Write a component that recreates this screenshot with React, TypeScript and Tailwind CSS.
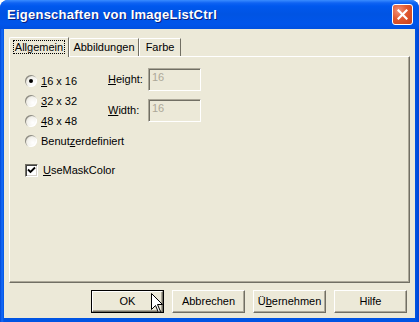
import React from "react";

const font = { fontFamily: '"Liberation Sans", Arial, sans-serif' };

function Radio({ checked, label }: { checked?: boolean; label: React.ReactNode }) {
  return (
    <div className="flex items-center h-[20px]">
      <div className="w-[12px] h-[12px] rounded-full relative shrink-0"
        style={{ background: "radial-gradient(circle at 65% 65%, #ffffff 0%, #f4f3ee 45%, #d7d3c4 100%)", boxShadow: "inset 1px 1px 0 #8d8b82, inset -1px -1px 0 #ffffff" }}>
        {checked && <div className="absolute left-[4px] top-[4px] w-[4px] h-[4px] rounded-full bg-black" />}
      </div>
      <span className="ml-[4px] text-[11px] text-black leading-none">{label}</span>
    </div>
  );
}

function Btn({ children, def }: { children: React.ReactNode; def?: boolean }) {
  return (
    <div className={`w-[73px] h-[23px] flex items-center justify-center text-[11px] text-black ${def ? "border border-black" : ""}`}>
      <div className="w-full h-full flex items-center justify-center border-t border-l border-white border-r border-b border-r-[#716f64] border-b-[#716f64] bg-[#ece9d8]"
        style={{ boxShadow: "inset -1px -1px 0 #aca899" }}>
        {children}
      </div>
    </div>
  );
}

function Edit() {
  return (
    <div className="w-[53px] h-[23px] border-t border-l border-[#aca899] border-r border-b border-r-white border-b-white" >
      <div className="w-full h-full border-t border-l border-[#716f64] bg-[#ece9d8] text-[11px] text-[#aca899] pl-[2px] pt-[1px] leading-[13px]">16</div>
    </div>
  );
}

export default function App() {
  return (
    <div className="w-[419px] h-[322px] relative overflow-hidden" style={font}>
      <div className="w-full h-full flex flex-col rounded-t-[8px] overflow-hidden bg-[#0054e3]">
        {/* title bar */}
        <div className="h-[29px] flex items-center pl-[7px] pr-[6px] shrink-0"
          style={{ background: "linear-gradient(to bottom, #3a8cff 0px, #0f63f3 3px, #0058ee 6px, #0054e3 14px, #0055eb 24px, #0050e0 29px)" }}>
          <span className="text-white font-bold text-[13px] tracking-[0.25px]" style={{ textShadow: "1px 1px 0 #0a1f80" }}>Eigenschaften von ImageListCtrl</span>
          <div className="ml-auto w-[21px] h-[21px] rounded-[3px] border border-white flex items-center justify-center"
            style={{ background: "radial-gradient(circle at 30% 30%, #f2927a 0%, #e0582f 45%, #c9401c 100%)" }}>
            <svg width="11" height="11" viewBox="0 0 11 11">
              <path d="M1.5 1.5 L9.5 9.5 M9.5 1.5 L1.5 9.5" stroke="white" strokeWidth="2.2" strokeLinecap="square" />
            </svg>
          </div>
        </div>
        {/* body */}
        <div className="flex-1 flex px-[4px] pb-[4px]" style={{ background: "linear-gradient(to right, #0046d5 0px, #166cf9 2px, #0054e3 4px, #0054e3 calc(100% - 4px), #0046d5 100%)" }}>
          <div className="flex-1 bg-[#ece9d8] flex flex-col pl-[5px] pr-[5px] pt-[7px]">
            {/* tabs */}
            <div className="flex items-end h-[20px] text-[11px] text-black">
              <div className="h-[20px] w-[60px] border-t border-l border-white border-r border-r-[#716f64] relative flex items-center justify-center rounded-tl-[2px] bg-[#ece9d8] z-10 mb-[-1px] pb-[1px]">
                <span className="border border-dotted border-black px-[1px] leading-[12px]">Allgemein</span>
              </div>
              <div className="h-[18px] w-[70px] border-t border-l border-white border-r border-r-[#716f64] flex items-center justify-center rounded-tl-[2px]">Abbildungen</div>
              <div className="h-[18px] w-[42px] border-t border-l border-white border-r border-r-[#716f64] flex items-center justify-center rounded-tl-[2px]">Farbe</div>
            </div>
            {/* panel */}
            <div className="h-[227px] border-t border-l border-white border-r border-b border-r-[#716f64] border-b-[#716f64] flex flex-col pl-[15px] pt-[11px]"
              style={{ boxShadow: "inset -1px -1px 0 #aca899" }}>
              <div className="flex">
                <div className="flex flex-col w-[83px] pt-[3px]">
                  <Radio checked label={<><u>1</u>6 x 16</>} />
                  <Radio label={<><u>3</u>2 x 32</>} />
                  <Radio label={<><u>4</u>8 x 48</>} />
                  <Radio label={<>Benut<u>z</u>erdefiniert</>} />
                </div>
                <div className="flex flex-col gap-[8px] text-[11px] text-black">
                  <div className="flex items-center h-[23px]">
                    <span className="w-[40px]"><u>H</u>eight:</span>
                    <Edit />
                  </div>
                  <div className="flex items-center h-[23px]">
                    <span className="w-[40px]"><u>W</u>idth:</span>
                    <Edit />
                  </div>
                </div>
              </div>
              <div className="flex items-center mt-[11px]">
                <div className="w-[13px] h-[13px] bg-white border-t border-l border-[#716f64] border-r border-b border-r-white border-b-white relative shrink-0"
                  style={{ boxShadow: "inset 1px 1px 0 #404040, inset -1px -1px 0 #d4d0c8" }}>
                  <svg className="absolute left-[1px] top-[1px]" width="9" height="9" viewBox="0 0 9 9">
                    <path d="M1 3.5 L3.5 6 L8 1.5" stroke="black" strokeWidth="1.8" fill="none" />
                  </svg>
                </div>
                <span className="ml-[5px] text-[11px] text-black"><u>U</u>seMaskColor</span>
              </div>
            </div>
            {/* buttons */}
            <div className="flex justify-end gap-[8px] mt-[7px] pr-[3px]">
              <Btn def>OK</Btn>
              <Btn>Abbrechen</Btn>
              <Btn><span>Ü<u>b</u>ernehmen</span></Btn>
              <Btn>Hilfe</Btn>
            </div>
          </div>
        </div>
      </div>
      {/* cursor */}
      <svg className="absolute left-[151px] top-[293px]" width="13" height="22" viewBox="0 0 13 22">
        <path d="M0.5 0.5 L0.5 16.5 L4.5 12.5 L7.5 19.5 L9.5 18.5 L6.5 11.5 L11.5 11.5 Z" fill="white" stroke="black" strokeWidth="1" />
      </svg>
    </div>
  );
}
